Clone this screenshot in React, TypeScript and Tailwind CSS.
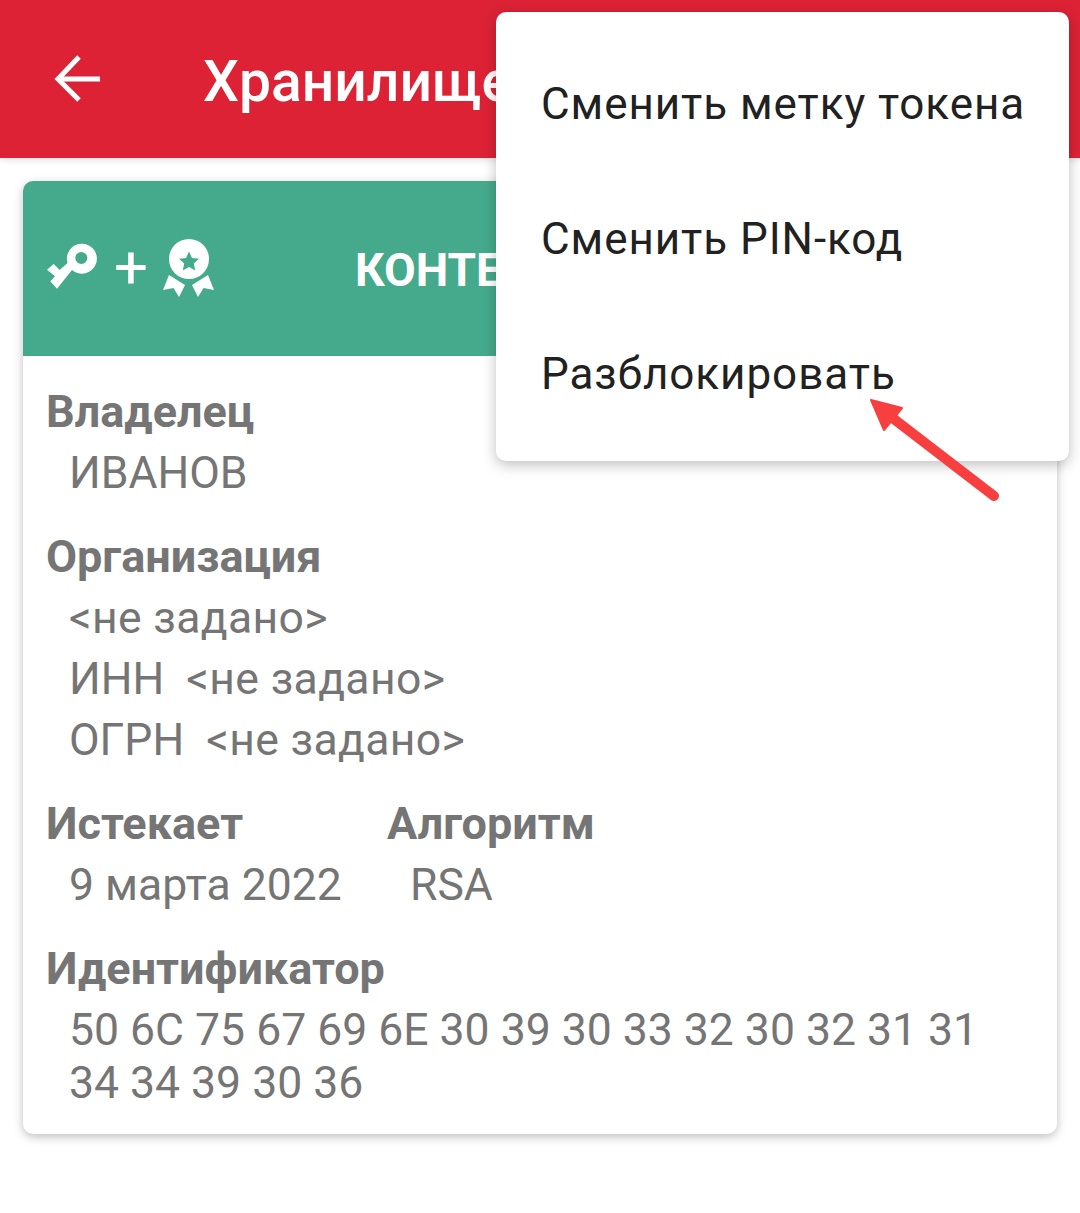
const labelClass = 'text-[45px] leading-[61px] font-bold text-[#757575]';
const valueClass = 'text-[44.500px] leading-[61px] text-[#757575] pl-[23px]';
const menuItemClass = 'h-[135px] flex items-center';

function KeyIcon() {
  return (
    <svg width="50" height="46" viewBox="0 0 50 46" fill="none">
      <path
        fillRule="evenodd"
        fill="#fff"
        d="M0 26.700 6.700 21l6 6 7.800-7A15 15 0 1 1 25 27L10 45.700 3.300 38.300 8 33.300ZM34.300 9a6 6 0 1 0 0 12 6 6 0 0 0 0-12Z"
      />
    </svg>
  );
}

function AwardIcon() {
  return (
    <svg width="51" height="58" viewBox="0 0 51 58" fill="none">
      <path
        fillRule="evenodd"
        fill="#fff"
        d="M26 0a20 20 0 1 1 0 40 20 20 0 0 1 0-40Zm0 12.500-3 6.500-7 .8 5.200 4.700-1.400 7 6.200-3.500 6.200 3.500-1.400-7 5.200-4.700-7-.8Z"
      />
      <path fill="#fff" d="M6 36 22 46 16 58 10.500 49 0 51Z" />
      <path fill="#fff" d="M45 36 29 46 35 58 40.500 49 51 51Z" />
    </svg>
  );
}

function NotSet() {
  return <span className="tracking-[0.35px]">&lt;не задано&gt;</span>;
}

export default function App() {
  return (
    <div className="relative w-[1080px] h-[1213px] bg-white overflow-hidden font-['Roboto',sans-serif]">
      <header className="h-[158px] bg-[#dd2236] flex items-center text-white shadow-[0_2px_6px_rgba(0,0,0,0.12)]">
        <svg className="ml-[53px] mt-[-3px]" width="48" height="48" viewBox="0 0 48 48" fill="none" stroke="#fff" strokeWidth="5">
          <path d="M47 25H5" />
          <path d="M26 3 5 25l21 21" />
        </svg>
        <h1 className="ml-[102px] text-[57px] leading-none font-medium mt-[5px]">Хранилище</h1>
      </header>

      <div className="mx-[23px] mt-[23px] h-[953px] rounded-[10px] overflow-hidden bg-white shadow-[0_3px_10px_rgba(0,0,0,0.25)]">
        <div className="h-[175px] bg-[#45aa8b] flex items-center text-white">
          <div className="ml-[24px] mt-[-1px] flex items-center">
            <div className="mt-[-5px]"><KeyIcon /></div>
            <span className="ml-[17px] w-[34px] text-[60px] leading-none font-normal mt-[-1px]">+</span>
            <div className="ml-[15px]"><AwardIcon /></div>
          </div>
          <span className="ml-[141px] text-[46px] leading-none font-bold mt-[3px]">КОНТЕЙНЕР</span>
        </div>

        <div className="px-[23px] pt-[25px]">
          <p className={labelClass}>Владелец</p>
          <p className={`${valueClass} mt-[1px]`}>ИВАНОВ</p>

          <p className={`${labelClass} mt-[22px]`}>Организация</p>
          <p className={`${valueClass} mt-[1px]`}><NotSet /></p>
          <p className={valueClass}>ИНН&nbsp; <NotSet /></p>
          <p className={valueClass}>ОГРН&nbsp; <NotSet /></p>

          <div className="flex mt-[22px]">
            <div className="w-[341px]">
              <p className={labelClass}>Истекает</p>
              <p className={`${valueClass} mt-[1px]`}>9 марта 2022</p>
            </div>
            <div>
              <p className={labelClass}>Алгоритм</p>
              <p className={`${valueClass} mt-[1px]`}>RSA</p>
            </div>
          </div>

          <p className={`${labelClass} mt-[22px]`}>Идентификатор</p>
          <p className="text-[44.500px] leading-[53px] text-[#757575] pl-[23px] pr-[50px] mt-[5px]">
            50 6C 75 67 69 6E 30 39 30 33 32 30 32 31 31 34 34 39 30 36
          </p>
        </div>
      </div>

      <div className="absolute left-[496px] top-[12px] w-[573px] h-[449px] bg-white rounded-[10px] shadow-[0_4px_14px_rgba(0,0,0,0.25)] flex flex-col pl-[45px] pt-[24px] text-[#212121] text-[44px] tracking-[0.95px]">
        <div className={menuItemClass}>Сменить метку токена</div>
        <div className={menuItemClass}>Сменить PIN-код</div>
        <div className={menuItemClass}>Разблокировать</div>
      </div>

      <svg className="absolute left-[860px] top-[390px]" width="150" height="120" viewBox="0 0 150 120" fill="none">
        <path d="M30 26 134 106" stroke="#f83f3f" strokeWidth="10" strokeLinecap="round" />
        <path d="M11 10 42 18 24 40Z" fill="#f83f3f" stroke="#f83f3f" strokeWidth="2" strokeLinejoin="round" />
      </svg>
    </div>
  );
}
